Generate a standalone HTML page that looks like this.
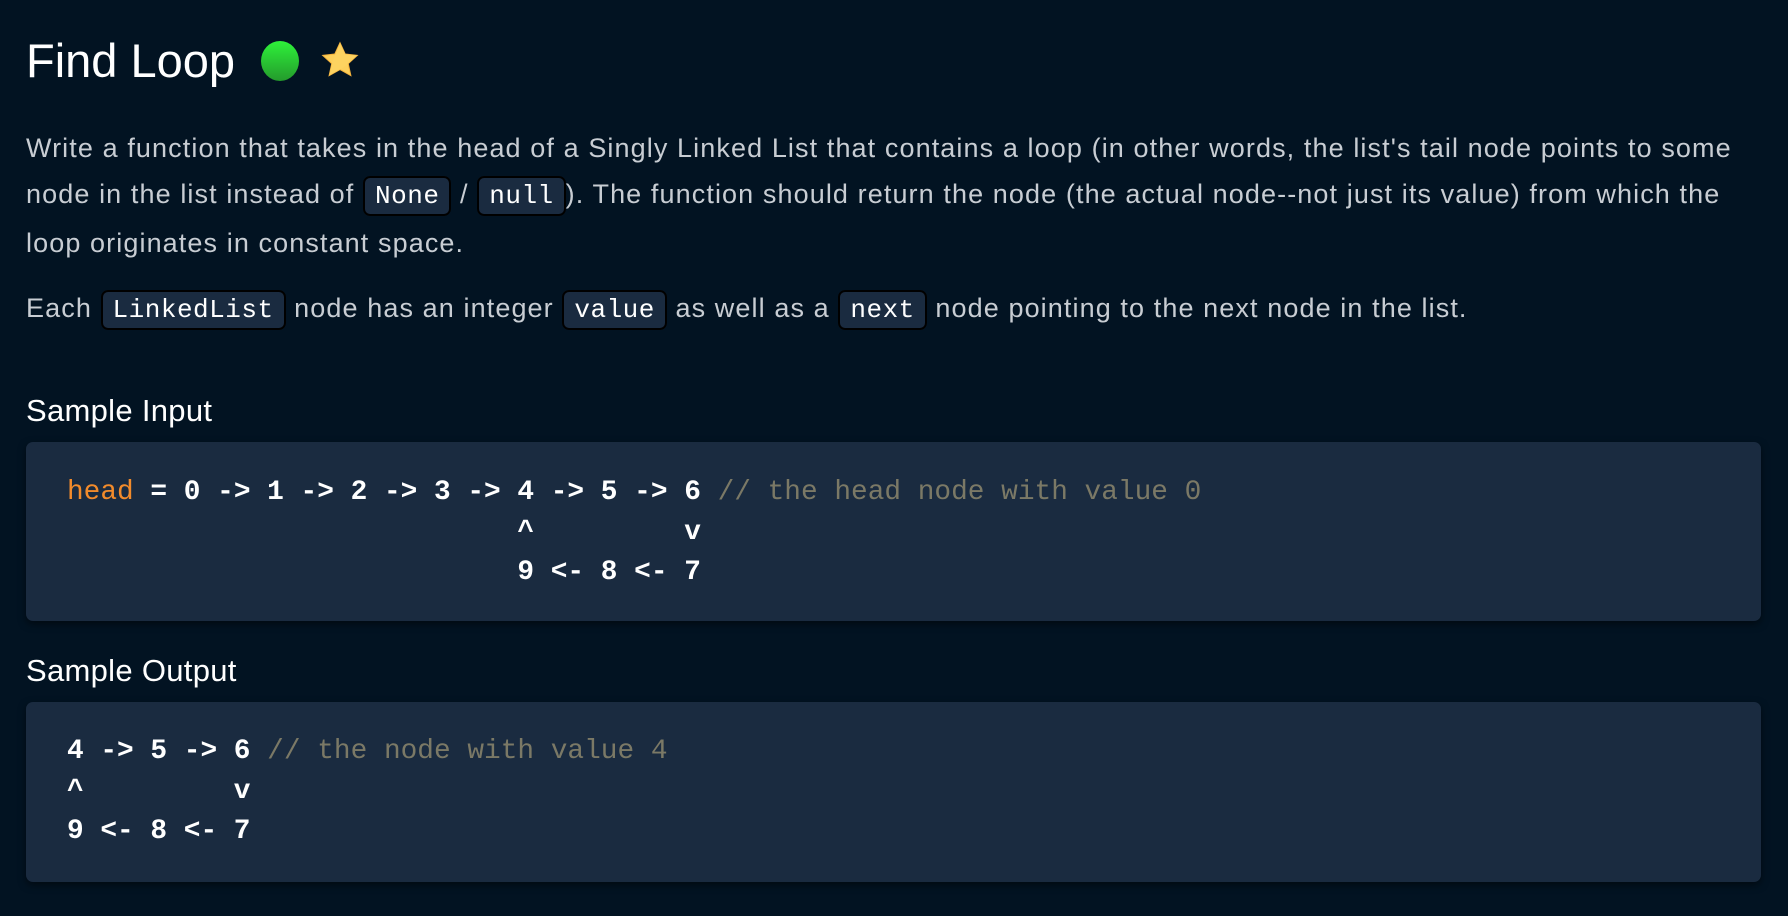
<!DOCTYPE html>
<html><head><meta charset="utf-8"><style>
*{margin:0;padding:0;box-sizing:border-box}
html,body{width:1788px;height:916px;background:#021322;overflow:hidden}
body{font-family:"Liberation Sans",sans-serif;color:#c8cdd3;position:relative}
.abs{position:absolute;white-space:nowrap}
h1{position:absolute;left:26px;top:33px;font-size:47px;font-weight:normal;color:#fff;letter-spacing:0px}
.p{position:absolute;left:26px;font-size:27px;letter-spacing:1.1px;white-space:nowrap;color:#c8cdd3;height:46px;line-height:46px}
code{font-family:"Liberation Mono",monospace;font-size:26px;color:#fff;background:#1a2b40;border:2px solid #000;border-radius:7px;padding:3px 10px;letter-spacing:0.5px}
h2{position:absolute;left:26px;font-size:31px;font-weight:normal;color:#fff;letter-spacing:0.3px}
.box{position:absolute;left:26px;width:1735px;background:#1a2b40;border-radius:7px;box-shadow:0 3px 8px rgba(0,0,0,.5)}
pre{position:absolute;left:41px;font-family:"Liberation Mono",monospace;font-size:27.8px;line-height:40px;color:#fff;font-weight:bold}
.o{color:#f28b2b;font-weight:normal}.c{color:#7b7966;font-weight:normal}
</style></head><body>
<h1>Find Loop</h1>
<svg class="abs" style="left:259px;top:39px" width="42" height="44" viewBox="0 0 42 44"><defs><linearGradient id="g" x1="0" y1="0" x2="0" y2="1"><stop offset="0" stop-color="#2ef23a"/><stop offset="1" stop-color="#249a2c"/></linearGradient></defs><ellipse cx="21" cy="22" rx="19" ry="20" fill="url(#g)"/></svg>
<svg class="abs" style="left:320px;top:41px" width="40" height="38" viewBox="0 0 24 23"><path d="M12 1l3.2 6.9 7.3.8-5.5 5 1.6 7.3L12 17.3 5.4 21l1.6-7.3-5.5-5 7.3-.8z" fill="#fdd05b" stroke="#f4b23c" stroke-width=".6"/><path d="M12 1l3.2 6.9 7.3.8-5.5 5L12 17.3 5.4 21l1.6-7.3L12 1z" fill="#fdd564" opacity=".6"/></svg>
<div class="p" style="top:125px">Write a function that takes in the head of a Singly Linked List that contains a loop (in other words, the list's tail node points to some</div>
<div class="p" style="top:171px">node in the list instead of <code>None</code> / <code>null</code>). The function should return the node (the actual node--not just its value) from which the</div>
<div class="p" style="top:220px">loop originates in constant space.</div>
<div class="p" style="top:285px">Each <code>LinkedList</code> node has an integer <code>value</code> as well as a <code>next</code> node pointing to the next node in the list.</div>
<h2 style="top:393px">Sample Input</h2>
<div class="box" style="top:442px;height:179px"><pre style="top:31px"><span class="o">head</span> = 0 -&gt; 1 -&gt; 2 -&gt; 3 -&gt; 4 -&gt; 5 -&gt; 6 <span class="c">// the head node with value 0</span>
                           ^         v
                           9 &lt;- 8 &lt;- 7</pre></div>
<h2 style="top:653px">Sample Output</h2>
<div class="box" style="top:702px;height:180px"><pre style="top:30px">4 -&gt; 5 -&gt; 6 <span class="c">// the node with value 4</span>
^         v
9 &lt;- 8 &lt;- 7</pre></div>
</body></html>
